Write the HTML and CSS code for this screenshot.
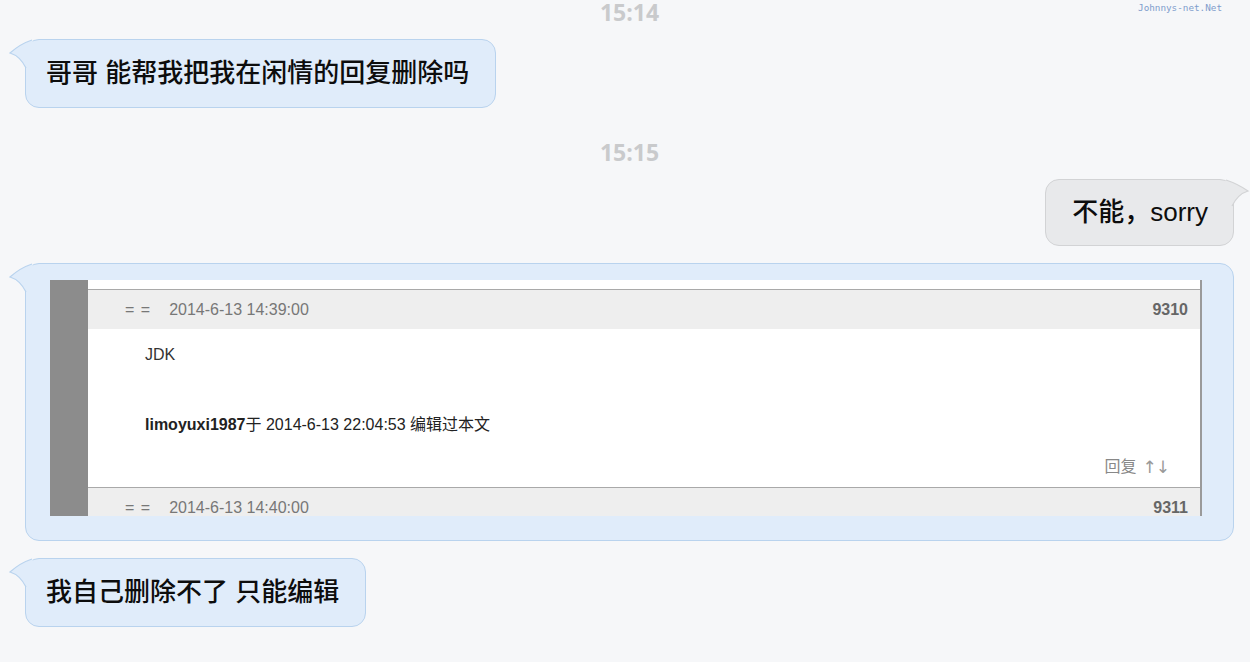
FILE: index.html
```html
<!DOCTYPE html>
<html lang="zh">
<head>
<meta charset="utf-8">
<title>chat</title>
<link rel="stylesheet" href="styles.css">
</head>
<body>
<div class="watermark">Johnnys-net.Net</div>
<div class="chat">
  <div class="time t1">15:14</div>
  <div class="row row-left r1">
    <div class="bubble blue">
      <svg class="tail tail-left" width="30" height="34" viewBox="0 0 30 34"><path class="tf" d="M23 2 Q11 6 1 15 Q11 18 17 30 L26 30 L26 8 Z"/><path class="ts" d="M23 2 Q11 6 1 15 Q11 18 17 30"/></svg>
      哥哥 能帮我把我在闲情的回复删除吗
    </div>
  </div>
  <div class="time t2">15:15</div>
  <div class="row row-right r2">
    <div class="bubble grey">
      <svg class="tail tail-right" width="30" height="34" viewBox="0 0 30 34"><path class="tf" d="M7 2 Q19 6 29 13 Q19 16 13 28 L4 28 L4 8 Z"/><path class="ts" d="M7 2 Q19 6 29 13 Q19 16 13 28"/></svg>
      不能，sorry
    </div>
  </div>
  <div class="row row-left r3">
    <div class="bubble blue wide">
      <svg class="tail tail-left" width="30" height="34" viewBox="0 0 30 34"><path class="tf" d="M23 2 Q11 6 1 15 Q11 18 17 30 L26 30 L26 8 Z"/><path class="ts" d="M23 2 Q11 6 1 15 Q11 18 17 30"/></svg>
      <div class="shot">
        <div class="bar"></div>
        <div class="page">
          <div class="gap-top"></div>
          <div class="post-head">
            <span class="eq">= =</span><span class="date">2014-6-13 14:39:00</span>
            <span class="num">9310</span>
          </div>
          <div class="post-body">
            <div class="line jdk">JDK</div>
            <div class="line edit"><b>limoyuxi1987</b>于 2014-6-13 22:04:53 编辑过本文</div>
            <div class="line actions">回复 <span class="arrows">↑↓</span></div>
          </div>
          <div class="post-head">
            <span class="eq">= =</span><span class="date">2014-6-13 14:40:00</span>
            <span class="num">9311</span>
          </div>
        </div>
      </div>
    </div>
  </div>
  <div class="row row-left r4">
    <div class="bubble blue">
      <svg class="tail tail-left" width="30" height="34" viewBox="0 0 30 34"><path class="tf" d="M23 2 Q11 6 1 15 Q11 18 17 30 L26 30 L26 8 Z"/><path class="ts" d="M23 2 Q11 6 1 15 Q11 18 17 30"/></svg>
      我自己删除不了 只能编辑
    </div>
  </div>
</div>
</body>
</html>
```

FILE: styles.css
```css
html, body {
  margin: 0;
  padding: 0;
  background: #f6f7f9;
}
body {
  width: 1250px;
  height: 662px;
  overflow: hidden;
  position: relative;
  font-family: "Liberation Sans", "Noto Sans CJK SC", sans-serif;
}
.watermark {
  position: absolute;
  top: 1px;
  right: 28px;
  font-family: "DejaVu Sans Mono", monospace;
  font-size: 9.3px;
  line-height: 14px;
  color: #7f9dcc;
}
.chat {
  display: flex;
  flex-direction: column;
  padding: 0 16px 0 25px;
}
.time {
  text-align: center;
  font-family: "Open Sans", sans-serif;
  font-weight: 700;
  font-size: 23px;
  line-height: 30px;
  height: 30px;
  color: #c9cacc;
}
.t1 { margin-top: -3px; }
.t2 { margin-top: 29px; }
.row { display: flex; }
.row-right { justify-content: flex-end; }
.r1 { margin-top: 12px; }
.r2 { margin-top: 12px; }
.r3 { margin-top: 17px; }
.r4 { margin-top: 17px; }

.bubble {
  position: relative;
  font-size: 26px;
  line-height: 36px;
  font-weight: 500;
  color: #0d0d0d;
  border-radius: 14px;
  padding: 15px 26px 16px 20px;
}
.blue {
  background: #e0ecfa;
  border: 1px solid #b9d3ee;
}
.grey {
  background: #e8e9eb;
  border: 1px solid #d2d3d5;
  padding: 14px 25px 15px 26px;
}
.tail {
  position: absolute;
  overflow: visible;
}
.tail-left { left: -17px; top: -2px; }
.tail-right { right: -16px; top: -2px; }
.blue .tf { fill: #e0ecfa; }
.blue .ts { fill: none; stroke: #b9d3ee; stroke-width: 1.2; }
.grey .tf { fill: #e8e9eb; }
.grey .ts { fill: none; stroke: #d2d3d5; stroke-width: 1.2; }

.wide {
  flex: 1;
  padding: 16px 31px 24px 24px;
  font-weight: 400;
}
.shot {
  display: flex;
  height: 236px;
  overflow: hidden;
}
.bar {
  width: 38px;
  background: #8c8c8c;
}
.page {
  flex: 1;
  background: #fff;
  border-right: 2px solid #9a9a9a;
  font-size: 16px;
}
.gap-top { height: 9px; }
.post-head {
  display: flex;
  align-items: center;
  height: 39px;
  flex-shrink: 0;
  background: #eeeeee;
  border-top: 1px solid #a9a9a9;
  padding: 0 12px 0 37px;
  color: #777;
  font-size: 16px;
  line-height: 20px;
}
.eq { letter-spacing: 1px; }
.date { margin-left: 18px; }
.num {
  margin-left: auto;
  font-weight: bold;
  color: #666;
}
.post-body {
  display: flex;
  flex-direction: column;
  padding: 16px 30px 10px 57px;
  line-height: 20px;
}
.line { height: 20px; }
.jdk { color: #333; }
.edit { margin-top: 50px; color: #222; }
.actions {
  margin-top: 22px;
  align-self: flex-end;
  color: #888;
  display: flex;
  align-items: center;
}
.arrows {
  font-family: "DejaVu Sans", sans-serif;
  font-size: 17px;
  letter-spacing: -1px;
  color: #999;
  margin-left: 6px;
  margin-right: 1px;
}
```
